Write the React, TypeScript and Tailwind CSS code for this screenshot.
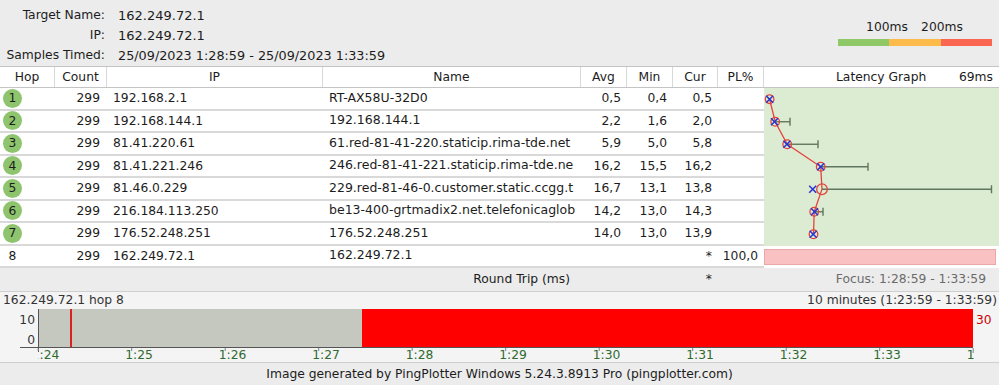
import * as React from "react";

type Hop = {
  n: number;
  ip: string;
  name: string;
  avg: string;
  min: string;
  cur: string;
  pl: string;
};

// names are cut where the column ends, as PingPlotter draws them
const hops: Hop[] = [
  { n: 1, ip: "192.168.2.1", name: "RT-AX58U-32D0", avg: "0,5", min: "0,4", cur: "0,5", pl: "" },
  { n: 2, ip: "192.168.144.1", name: "192.168.144.1", avg: "2,2", min: "1,6", cur: "2,0", pl: "" },
  { n: 3, ip: "81.41.220.61", name: "61.red-81-41-220.staticip.rima-tde.net", avg: "5,9", min: "5,0", cur: "5,8", pl: "" },
  { n: 4, ip: "81.41.221.246", name: "246.red-81-41-221.staticip.rima-tde.ne", avg: "16,2", min: "15,5", cur: "16,2", pl: "" },
  { n: 5, ip: "81.46.0.229", name: "229.red-81-46-0.customer.static.ccgg.t", avg: "16,7", min: "13,1", cur: "13,8", pl: "" },
  { n: 6, ip: "216.184.113.250", name: "be13-400-grtmadix2.net.telefonicaglob", avg: "14,2", min: "13,0", cur: "14,3", pl: "" },
  { n: 7, ip: "176.52.248.251", name: "176.52.248.251", avg: "14,0", min: "13,0", cur: "13,9", pl: "" },
  { n: 8, ip: "162.249.72.1", name: "162.249.72.1", avg: "", min: "", cur: "*", pl: "100,0" },
];

// graph points in px from the left edge of the latency column
const points = [
  { avg: 5.6, cur: 5.6, max: 0 },
  { avg: 11.2, cur: 10.5, max: 26 },
  { avg: 23.2, cur: 22.9, max: 54 },
  { avg: 56.7, cur: 56.7, max: 104 },
  { avg: 58, cur: 48.7, max: 227.5 },
  { avg: 50.2, cur: 50.5, max: 59 },
  { avg: 49.5, cur: 49.2, max: 53 },
];

const ROW = 22.5;

function LatencyGraph() {
  const cy = (i: number) => 11.25 + i * ROW;
  return (
    <svg width="235" height="157.5" viewBox="0 0 235 157.5">
      {points.map((p, i) =>
        p.max > p.avg + 4 ? (
          <g key={"e" + i} stroke="#5f765f" strokeWidth="1.4">
            <line x1={p.avg} y1={cy(i)} x2={p.max} y2={cy(i)} />
            <line x1={p.max} y1={cy(i) - 4} x2={p.max} y2={cy(i) + 4} />
          </g>
        ) : null
      )}
      <polyline
        points={points.map((p, i) => `${p.avg},${cy(i)}`).join(" ")}
        fill="none"
        stroke="#e4443c"
        strokeWidth="1.3"
      />
      {points.map((p, i) => (
        <g key={"m" + i}>
          <circle cx={p.avg} cy={cy(i)} r={i === 4 ? 5.3 : 4.3} fill="none" stroke="#e4443c" strokeWidth="1.3" />
          <g stroke="#2a36d0" strokeWidth="1.6">
            <line x1={p.cur - 3.5} y1={cy(i) - 3.5} x2={p.cur + 3.5} y2={cy(i) + 3.5} />
            <line x1={p.cur - 3.5} y1={cy(i) + 3.5} x2={p.cur + 3.5} y2={cy(i) - 3.5} />
          </g>
        </g>
      ))}
    </svg>
  );
}

function TimeChart() {
  const ticks = Array.from({ length: 11 }, (_, k) => 38.2 + k * 93.5);
  return (
    <svg width="999" height="53" viewBox="0 0 999 53" className="block">
      <defs>
        <clipPath id="lbl">
          <rect x="38.6" y="38" width="935.4" height="15" />
        </clipPath>
      </defs>
      <rect x="38" y="0" width="324" height="38" fill="#c4c8bf" />
      <rect x="362" y="0" width="611" height="38" fill="#ff0000" />
      <rect x="70" y="0" width="2" height="38" fill="#dd2020" />
      <line x1="38.5" y1="0" x2="38.5" y2="43" stroke="#555" />
      <line x1="20" y1="38.5" x2="973" y2="38.5" stroke="#555" />
      {ticks.map((t, k) => (
        <line key={k} x1={t} y1="39" x2={t} y2={k === 10 ? 44 : 42} stroke="#808080" />
      ))}
      <g clipPath="url(#lbl)" fill="#2f6a2f" fontSize="12.3" fontFamily="DejaVu Sans, sans-serif">
        {ticks.map((t, k) => (
          <text key={k} x={t - 6.5} y="50">
            {`1:${24 + k}`}
          </text>
        ))}
      </g>
      <g fontSize="12.3" fontFamily="DejaVu Sans, sans-serif">
        <text x="35" y="14.5" textAnchor="end" fill="#333">10</text>
        <text x="35" y="34.5" textAnchor="end" fill="#333">0</text>
        <text x="976" y="14.5" fill="#cc0000">30</text>
      </g>
    </svg>
  );
}

export default function App() {
  return (
    <div className="w-[999px] h-[385px] overflow-hidden bg-[#ececec] text-[#1c1c1c] text-[12.3px] font-['DejaVu_Sans',sans-serif] flex flex-col">
      {/* Summary header */}
      <div className="h-[66px] flex justify-between">
        <div className="pt-[6px] grid grid-cols-[105px_auto] gap-x-[13px] leading-[19.5px]">
          <span className="text-right">Target Name:</span>
          <span className="text-[13px]">162.249.72.1</span>
          <span className="text-right">IP:</span>
          <span className="text-[13px]">162.249.72.1</span>
          <span className="text-right">Samples Timed:</span>
          <span className="text-[12.8px]">25/09/2023 1:28:59 - 25/09/2023 1:33:59</span>
        </div>
        <div className="pt-[19px] pr-[7px] flex flex-col">
          <div className="flex leading-[16px]">
            <span className="w-[26px]" />
            <span className="w-[46px] text-center">100ms</span>
            <span className="w-[9px]" />
            <span className="w-[46px] text-center">200ms</span>
          </div>
          <div className="mt-[4px] h-[7px] w-[154px] flex">
            <div className="flex-1 bg-[#8fc866]" />
            <div className="flex-1 bg-[#fcbb4a]" />
            <div className="flex-1 bg-[#fa6650]" />
          </div>
        </div>
      </div>

      {/* Column headers */}
      <div className="h-[22px] bg-white border-y border-[#c4c4c4] flex leading-[20px]">
        <div className="w-[55px] text-center border-r border-[#d8d8d8]">Hop</div>
        <div className="w-[52px] text-center border-r border-[#d8d8d8]">Count</div>
        <div className="w-[216px] text-center border-r border-[#d8d8d8]">IP</div>
        <div className="w-[258px] text-center border-r border-[#d8d8d8]">Name</div>
        <div className="w-[46px] text-center border-r border-[#d8d8d8]">Avg</div>
        <div className="w-[46px] text-center border-r border-[#d8d8d8]">Min</div>
        <div className="w-[45px] text-center border-r border-[#d8d8d8]">Cur</div>
        <div className="w-[46px] text-center border-r border-[#d8d8d8]">PL%</div>
        <div className="flex-1 flex pl-[72px] pr-[6px]">
          <span>Latency Graph</span>
          <span className="ml-auto">69ms</span>
        </div>
      </div>

      {/* Hop rows */}
      <div className="flex bg-white">
        <div className="w-[764px]">
          {hops.map((h) => (
            <div key={h.n} className="h-[22.5px] border-b-2 border-[#d9d9d9] flex items-center whitespace-nowrap">
              <div className="w-[55px] shrink-0 pl-[3px]">
                <div
                  className={`w-[19px] h-[19px] rounded-full flex items-center justify-center ${
                    h.n < 8 ? "bg-[#8fc46f]" : ""
                  }`}
                >
                  {h.n}
                </div>
              </div>
              <div className="w-[52px] shrink-0 text-right pr-[7px]">299</div>
              <div className="w-[216px] shrink-0 pl-[6px]">{h.ip}</div>
              <div className="w-[258px] shrink-0 pl-[6px]">
                <div className="w-[246px] overflow-hidden text-[12.5px]">{h.name}</div>
              </div>
              <div className="w-[46px] shrink-0 text-right pr-[6px]">{h.avg}</div>
              <div className="w-[46px] shrink-0 text-right pr-[6px]">{h.min}</div>
              <div className="w-[45px] shrink-0 text-right pr-[6px]">{h.cur}</div>
              <div className="w-[46px] shrink-0 text-right pr-[6px]">{h.pl}</div>
            </div>
          ))}
        </div>
        <div className="flex-1 flex flex-col">
          <div className="h-[157.5px] bg-[#dcecd3]">
            <LatencyGraph />
          </div>
          <div className="h-[22.5px] py-[3px] pr-[3px]">
            <div className="h-full bg-[#f9c1c1] border border-[#e8a8a8]" />
          </div>
        </div>
      </div>

      {/* Round trip */}
      <div className="h-[22.5px] flex items-center whitespace-nowrap">
        <div className="w-[323px]" />
        <div className="w-[258px] text-right pr-[11px]">Round Trip (ms)</div>
        <div className="w-[92px]" />
        <div className="w-[45px] text-right pr-[6px]">*</div>
        <div className="w-[46px]" />
        <div className="flex-1 text-right pr-[13px] text-[#6b6b6b]">Focus: 1:28:59 - 1:33:59</div>
      </div>

      {/* Time chart */}
      <div className="h-[71px] border-t border-[#cfcfcf] bg-[#f4f4f4] flex flex-col">
        <div className="h-[17px] leading-[17px] flex justify-between pl-[3px] pr-[2px] text-[#333]">
          <span>162.249.72.1 hop 8</span>
          <span>10 minutes (1:23:59 - 1:33:59)</span>
        </div>
        <TimeChart />
      </div>

      {/* Footer */}
      <div className="flex-1 border-t border-[#cfcfcf] flex items-center justify-center">
        Image generated by PingPlotter Windows 5.24.3.8913 Pro (pingplotter.com)
      </div>
    </div>
  );
}
